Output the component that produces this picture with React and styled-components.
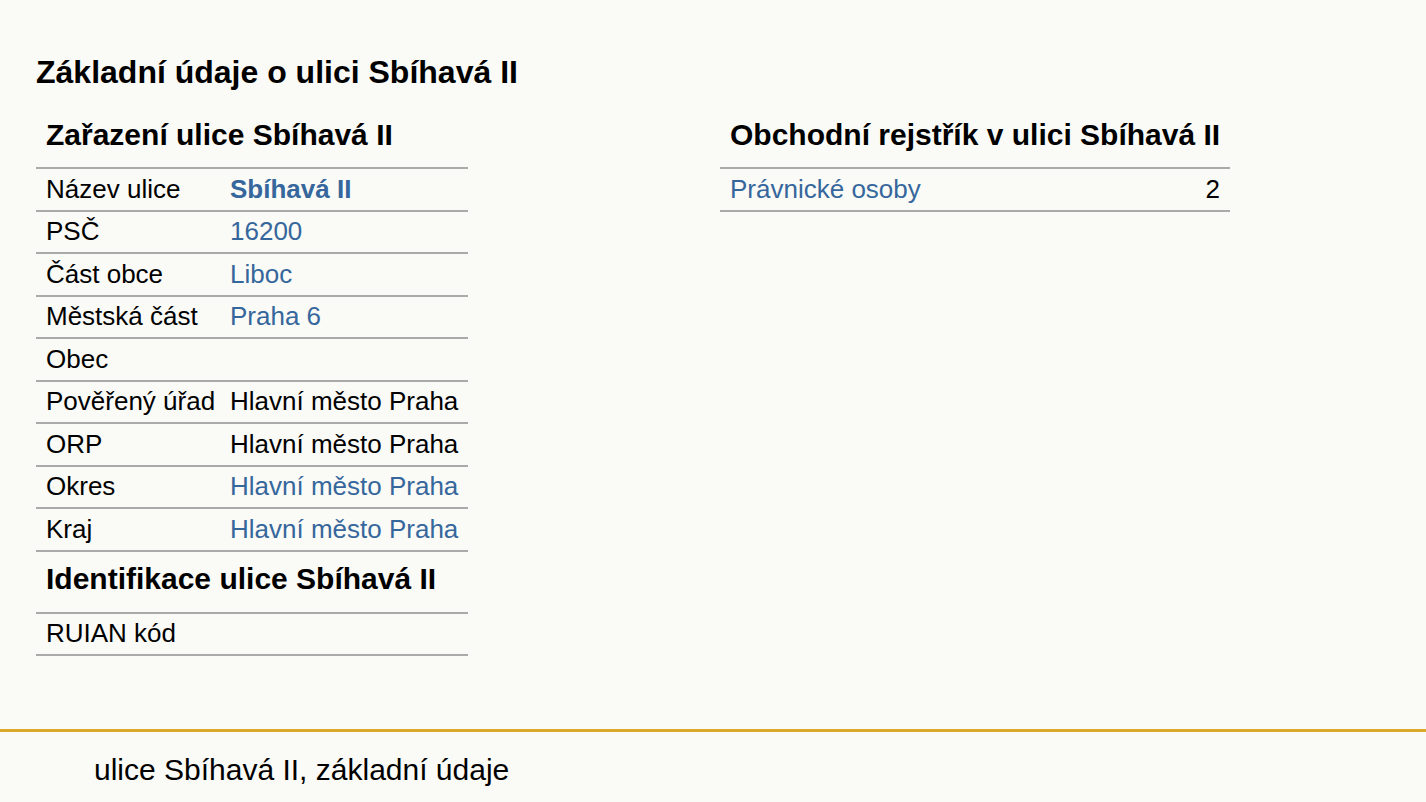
import React from 'react';
import styled, { createGlobalStyle } from 'styled-components';

const GlobalStyle = createGlobalStyle`
  html, body {
    margin: 0;
    padding: 0;
    background: #fafaf6;
  }
  body {
    font-family: "Liberation Sans", Arial, sans-serif;
    color: #000;
  }
`;

const Page = styled.div`
  min-height: 100vh;
  display: flex;
  flex-direction: column;
`;

const Main = styled.main`
  flex: 1;
  padding: 53.5px 36px 0;
`;

const Title = styled.h1`
  margin: 0 0 16.5px;
  font-size: 32px;
  line-height: 37px;
  font-weight: bold;
`;

const Columns = styled.div`
  display: flex;
  align-items: flex-start;
  gap: 253px;
`;

const Table = styled.div`
  width: ${(props) => props.width}px;
  display: grid;
  grid-template-columns: ${(props) => props.cols};
`;

const Heading = styled.h2`
  grid-column: 1 / -1;
  margin: 0;
  padding: 10.5px 10px 15.5px;
  font-size: 30px;
  line-height: 34px;
  font-weight: bold;
  white-space: nowrap;
  border-bottom: 2px solid #aaaaaa;
`;

const Cell = styled.div`
  padding: 4.5px 10px 6px;
  font-size: 26px;
  line-height: 30px;
  white-space: nowrap;
  border-bottom: 2px solid #aaaaaa;
  text-align: ${(props) => (props.right ? 'right' : 'left')};
`;

const Link = styled.a`
  color: #36679c;
  text-decoration: none;
  font-weight: ${(props) => (props.strong ? 'bold' : 'normal')};
`;

const Footer = styled.footer`
  border-top: 3px solid #dba927;
  padding: 20.5px 94px 15.5px;
  font-size: 30px;
  line-height: 34px;
`;

const rows = [
  ['Název ulice', { text: 'Sbíhavá II', link: true, strong: true }],
  ['PSČ', { text: '16200', link: true }],
  ['Část obce', { text: 'Liboc', link: true }],
  ['Městská část', { text: 'Praha 6', link: true }],
  ['Obec', { text: '' }],
  ['Pověřený úřad', { text: 'Hlavní město Praha' }],
  ['ORP', { text: 'Hlavní město Praha' }],
  ['Okres', { text: 'Hlavní město Praha', link: true }],
  ['Kraj', { text: 'Hlavní město Praha', link: true }],
];

export default function App() {
  return (
    <Page>
      <GlobalStyle />
      <Main>
        <Title>Základní údaje o ulici Sbíhavá II</Title>
        <Columns>
          <Table width={431} cols="184px 1fr">
            <Heading>Zařazení ulice Sbíhavá II</Heading>
            {rows.map(([label, value]) => (
              <React.Fragment key={label}>
                <Cell>{label}</Cell>
                <Cell>
                  {value.link ? (
                    <Link href="#" strong={value.strong}>
                      {value.text}
                    </Link>
                  ) : (
                    value.text || '\u00a0'
                  )}
                </Cell>
              </React.Fragment>
            ))}
            <Heading>Identifikace ulice Sbíhavá II</Heading>
            <Cell>RUIAN kód</Cell>
            <Cell>&nbsp;</Cell>
          </Table>
          <Table width={510} cols="1fr auto">
            <Heading>Obchodní rejstřík v ulici Sbíhavá II</Heading>
            <Cell>
              <Link href="#">Právnické osoby</Link>
            </Cell>
            <Cell right>2</Cell>
          </Table>
        </Columns>
      </Main>
      <Footer>ulice Sbíhavá II, základní údaje</Footer>
    </Page>
  );
}
